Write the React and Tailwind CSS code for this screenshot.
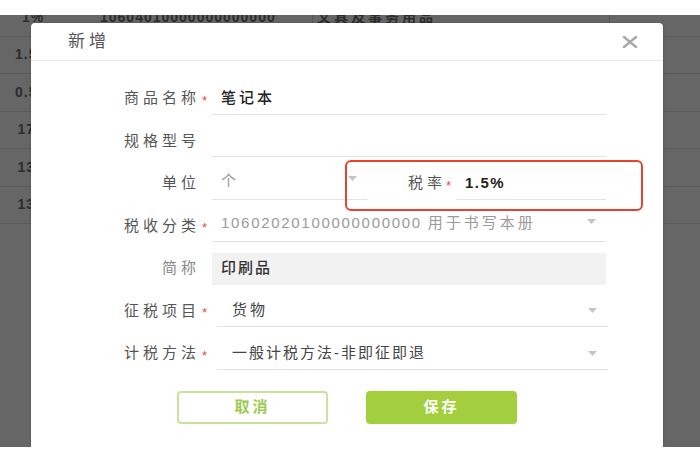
import React from "react";

const rates = ["1%", "1.5%", "0.5%", "17%", "13%", "13%"];

const Arrow = () => (
  <svg width="9" height="5" viewBox="0 0 9 5" className="shrink-0">
    <path d="M0 0h9L4.5 5z" fill="#c4c4c4" />
  </svg>
);

const Label = ({ text, star, light }) => (
  <>
    <div className="w-[169px] h-[32px] flex items-center justify-end">
      <span className={`tracking-[4px] ${light ? "text-[#888]" : "text-[#555]"}`}>{text}</span>
    </div>
    <div className="w-[12px] h-[32px] flex items-center pl-[2px]">
      {star && <span className="text-[#e8493a] text-[13px] leading-none mt-[3px]">*</span>}
    </div>
  </>
);

const App = () => {
  return (
    <div className="w-[700px] h-[460px] bg-white flex flex-col font-['Liberation_Sans','Noto_Sans_CJK_SC',sans-serif] text-[15px]">
      <div className="h-[15px] shrink-0" />

      {/* dimmed page with table behind */}
      <div className="relative h-[432px] shrink-0 bg-[#666666] overflow-hidden">
        <div className="-mt-[16px]">
          {rates.map((r, i) => (
            <div key={i} className="h-[37.5px] flex items-center border-b border-[#5b5b5b] text-[#2c2c2c] font-semibold text-[14px]">
              <div className="w-[66px] text-center tracking-[1px]">{r}</div>
              <div className="w-[247px] h-full flex items-center pl-[34px] border-r border-[#555] tracking-[1px]">
                {i === 0 ? "10604010000000000000" : ""}
              </div>
              <div className="w-[297px] h-full flex items-center pl-[4px] border-r border-[#555] tracking-[3px]">
                {i === 0 ? "文具及事务用品" : ""}
              </div>
              <div className="flex-1" />
            </div>
          ))}
        </div>

        {/* dialog */}
        <div className="absolute left-[31px] top-[8px] w-[632px] h-[440px] bg-white rounded-t-[4px] shadow-[0_0_2px_rgba(0,0,0,0.3)]">
          <div className="h-[38px] border-b border-[#e8e8e8] flex items-center justify-between pl-[37px] pr-[25px]">
            <span className="text-[17px] text-[#555] tracking-[4px]">新增</span>
            <svg width="16" height="12" viewBox="0 0 16 12">
              <path d="M2 1l12 10M14 1L2 11" stroke="#a8a8a8" strokeWidth="2.4" strokeLinecap="round" />
            </svg>
          </div>

          <div className="pt-[11px]">
            <div className="h-[42.5px] flex items-end">
              <Label text="商品名称" star />
              <div className="w-[394px] h-[32px] border-b border-[#e3e3e3] flex items-center pl-[9px]">
                <span className="text-[#222] font-medium tracking-[3px]">笔记本</span>
              </div>
            </div>

            <div className="h-[42.5px] flex items-end">
              <Label text="规格型号" />
              <div className="w-[394px] h-[32px] border-b border-[#e3e3e3]" />
            </div>

            <div className="h-[42.5px] flex items-end">
              <Label text="单位" />
              <div className="w-[155px] h-[32px] border-b border-[#e3e3e3] flex items-center justify-between pl-[9px] pr-[10px]">
                <span className="text-[#999] -mt-[4px]">个</span>
                <span className="-mt-[10px]"><Arrow /></span>
              </div>
              <div className="w-[79px] h-[32px] flex items-center justify-end">
                <span className="text-[#555] tracking-[4px]">税率</span>
              </div>
              <div className="w-[10px] h-[32px] flex items-center">
                <span className="text-[#e8493a] text-[13px] leading-none mt-[3px]">*</span>
              </div>
              <div className="w-[150px] h-[31px] border-b border-[#e3e3e3] flex items-center pl-[9px]">
                <span className="text-[#222] font-bold tracking-[1.5px]">1.5%</span>
              </div>
            </div>

            <div className="h-[42.5px] flex items-end">
              <Label text="税收分类" star />
              <div className="w-[394px] h-[32px] border-b border-[#e3e3e3] flex items-center justify-between pl-[9px] pr-[10px]">
                <span className="text-[#9a9a9a] -mt-[4px] whitespace-nowrap">
                  <span className="tracking-[1.7px]">10602020100000000000 </span>
                  <span className="tracking-[3px]">用于书写本册</span>
                </span>
                <span className="-mt-[8px]"><Arrow /></span>
              </div>
            </div>

            <div className="h-[42.5px] flex items-end">
              <Label text="简称" light />
              <div className="w-[394px] h-[32px] bg-[#f2f2f2] flex items-center pl-[9px]">
                <span className="text-[#333] font-medium tracking-[2px]">印刷品</span>
              </div>
            </div>

            <div className="h-[42.5px] flex items-end">
              <Label text="征税项目" star />
              <div className="ml-[5px] w-[391px] h-[32px] border-b border-[#e3e3e3] flex items-center justify-between pl-[15px] pr-[11px]">
                <span className="text-[#444] tracking-[3px]">货物</span>
                <Arrow />
              </div>
            </div>

            <div className="h-[42.5px] flex items-end">
              <Label text="计税方法" star />
              <div className="ml-[5px] w-[391px] h-[32px] border-b border-[#e3e3e3] flex items-center justify-between pl-[15px] pr-[11px]">
                <span className="text-[#444] tracking-[2px] whitespace-nowrap">一般计税方法-非即征即退</span>
                <Arrow />
              </div>
            </div>

            <div className="mt-[21.5px] flex justify-center gap-[38px]">
              <button className="w-[151px] h-[33px] rounded-[4px] border-2 border-[#c6e49b] bg-white text-[#9ccb52] font-semibold tracking-[3px]">
                取消
              </button>
              <button className="w-[151px] h-[33px] rounded-[4px] bg-[#a3cf3e] text-white font-semibold tracking-[3px]">
                保存
              </button>
            </div>
          </div>

          {/* highlight */}
          <div className="absolute left-[314px] top-[137px] w-[298px] h-[51px] border-2 border-[#e5432d] rounded-[6px] pointer-events-none" />
        </div>
      </div>

      <div className="flex-1" />
    </div>
  );
};

export default App;
